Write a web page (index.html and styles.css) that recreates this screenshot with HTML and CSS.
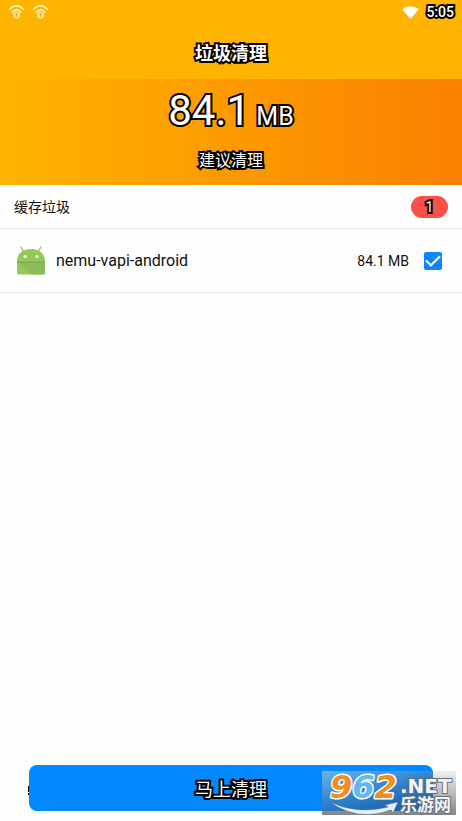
FILE: index.html
```html
<!DOCTYPE html>
<html lang="zh-CN">
<head>
<meta charset="utf-8">
<meta name="viewport" content="width=device-width, initial-scale=1">
<title>垃圾清理</title>
<link rel="stylesheet" href="styles.css">
</head>
<body>
<div class="app">
  <header class="top">
    <div class="status">
      <div class="status-icons">
        <svg class="cast" viewBox="0 0 16 15" aria-hidden="true"><path d="M1 5.500Q8-2 15 5.500M3.500 8Q8 3 12.500 8"/><circle cx="8" cy="10.500" r="3.200"/><path class="cast-key" d="M7 9.500h2M8 9.500v2.500"/></svg>
        <svg class="cast" viewBox="0 0 16 15" aria-hidden="true"><path d="M1 5.500Q8-2 15 5.500M3.500 8Q8 3 12.500 8"/><circle cx="8" cy="10.500" r="3.200"/><path class="cast-key" d="M7 9.500h2M8 9.500v2.500"/></svg>
      </div>
      <div class="status-right">
        <svg class="wifi" viewBox="0 0 18 14" aria-hidden="true"><path d="M0 3.500Q9-3 18 3.500L9 14Z"/></svg>
        <time class="clock outlined">5:05</time>
      </div>
    </div>
    <h1 class="title outlined">垃圾清理</h1>
  </header>
  <section class="summary">
    <p class="total outlined">84.1<span class="unit"> MB</span></p>
    <p class="advice outlined">建议清理</p>
  </section>
  <main class="list">
    <div class="group">
      <h2 class="group-name">缓存垃圾</h2>
      <span class="count outlined">1</span>
    </div>
    <div class="item">
      <svg class="robot" viewBox="0 0 28 29" aria-hidden="true">
        <path class="antenna" d="M6.500 5L4 1M21.500 5L24 1"/>
        <path class="body" d="M0 16C0 7 6 3 14 3S28 7 28 16V26.500Q28 28.500 26.500 28.500H1.500Q0 28.500 0 26.500Z"/>
        <path class="shade" d="M0 16H28V26.500Q28 28.500 26.500 28.500H15L3 18Z"/>
        <path class="seam" d="M0 16H28"/>
        <circle class="eye" cx="8" cy="10.500" r="1.500"/><circle class="eye" cx="20" cy="10.500" r="1.500"/>
      </svg>
      <label class="item-name" for="pick">nemu-vapi-android</label>
      <span class="item-size">84.1 MB</span>
      <input class="pick" id="pick" type="checkbox" checked>
    </div>
  </main>
  <footer class="actions">
    <button class="clean outlined" type="button">马上清理</button>
  </footer>
  <div class="brand">
    <svg class="brand-art" viewBox="0 0 134 44" role="img" aria-label="962.NET 乐游网">
      <path class="swoosh" d="M8 31Q36 44 66 36L63 34L76 31L71 42L69 39Q35 51 8 31Z"/>
      <text class="digits" x="8" y="27"><tspan class="orange">9</tspan><tspan class="sky">6</tspan><tspan class="orange">2</tspan></text>
      <text class="net" x="78" y="22">.NET</text>
      <text class="cn" x="78" y="40">乐游网</text>
    </svg>
  </div>
</div>
</body>
</html>
```
FILE: styles.css
```css
* { box-sizing: border-box; }

body {
  margin: 0;
  background: #fefefe;
  color: #111;
  font-family: Roboto, "Noto Sans CJK SC", sans-serif;
}

h1, h2, p { margin: 0; font-weight: 400; }

.app {
  position: relative;
  display: flex;
  flex-direction: column;
  min-height: 100vh;
}

.outlined {
  color: #fff;
  -webkit-text-stroke: 4px #000;
  paint-order: stroke fill;
  stroke-linejoin: round;
}

.top { background: #ffb400; }

.status {
  display: flex;
  justify-content: space-between;
  align-items: center;
  height: 24px;
  padding: 0 8px;
}

.status-icons, .status-right { display: flex; align-items: center; gap: 7px; }

.cast { width: 17px; height: 16px; fill: none; stroke: #fff3bd; stroke-width: 1.7; }
.cast circle { fill: #ffe58a; stroke: none; }
.cast .cast-key { stroke: #dda02a; stroke-width: 1; }

.wifi { width: 17px; height: 13px; fill: #fff; }

.clock { font-size: 14px; line-height: 24px; font-weight: 500; }

.title {
  padding: 16px 0 12px;
  font-size: 18px;
  line-height: 27px;
  font-weight: 700;
  text-align: center;
}

.summary {
  padding: 8px 0 12px;
  background: linear-gradient(90deg, #ffb400, #fa8000);
  text-align: center;
}

.total { font-size: 42px; line-height: 48px; }
.unit { font-size: 25px; }

.advice { padding-top: 14px; font-size: 16px; line-height: 24px; }

.summary .advice { padding-top: 8px; }

.list { flex: 1; }

.group {
  display: flex;
  align-items: center;
  justify-content: space-between;
  height: 44px;
  padding: 0 14px;
  border-bottom: 1px solid #ebebeb;
}

.group-name { font-size: 14px; line-height: 20px; }

.count {
  width: 37px;
  border-radius: 11px;
  background: #fb4f49;
  font-size: 14px;
  line-height: 22px;
  text-align: center;
}

.item {
  display: flex;
  align-items: center;
  height: 64px;
  padding: 0 20px 0 17px;
  border-bottom: 1px solid #ebebeb;
}

.robot { width: 28px; height: 29px; }
.robot .antenna { fill: none; stroke: #93bd60; stroke-width: 1.3; stroke-linecap: round; }
.robot .body { fill: #94c957; }
.robot .shade { fill: #8abb54; }
.robot .seam { stroke: #75a64b; stroke-width: 1; }
.robot .eye { fill: #fff; }

.item-name { flex: 1; padding-left: 11px; font-size: 16px; }
.item-size { font-size: 14px; }

.pick {
  appearance: none;
  width: 18px;
  height: 18px;
  margin: 0 0 0 15px;
  border-radius: 2px;
  background: #0b87fb;
  display: grid;
  place-items: center;
}

.pick:checked::before {
  content: "";
  width: 12px;
  height: 6px;
  margin-bottom: 4px;
  border: solid #fff;
  border-width: 0 0 2px 2px;
  transform: rotate(-45deg);
}

.actions { position: relative; padding: 0 29px 10px; }

/* dark sliver that shows past the button's left edge */
.actions::before {
  content: "";
  position: absolute;
  left: 28px;
  top: 21px;
  width: 1px;
  height: 9px;
  background: linear-gradient(#000 0 6px, transparent 6px 7px, #000 7px);
}

.clean {
  display: block;
  width: 100%;
  height: 46px;
  padding: 0;
  border: 0;
  border-radius: 8px;
  background: #0289ff;
  font-family: inherit;
  font-size: 18px;
}

.brand {
  position: absolute;
  right: 6px;
  bottom: 6px;
  width: 134px;
  height: 44px;
  background:
    linear-gradient(165deg, #6cb2ee, #2f80cc 50%, #12579a) left top / 111px 40px no-repeat,
    linear-gradient(#f0f0f0, #858585);
}

.brand-art { display: block; width: 100%; height: 100%; overflow: visible; }
.brand-art text { paint-order: stroke fill; stroke-linejoin: round; }
.swoosh { fill: #e5edf5; stroke: #4c6682; stroke-width: 0.5; }
.digits { font: italic 700 32px "DejaVu Sans", sans-serif; stroke: #fff; stroke-width: 3px; }
.orange { fill: #f28d20; }
.sky { fill: #62b7f5; }
.net { font: 700 20px "DejaVu Sans", sans-serif; fill: #f0f3f6; stroke: #66717c; stroke-width: 2px; }
.cn { font: 700 17px "Noto Sans CJK SC", sans-serif; fill: #f0f3f6; stroke: #66717c; stroke-width: 2px; }
```
